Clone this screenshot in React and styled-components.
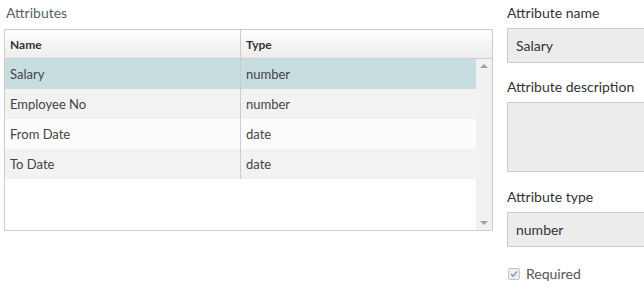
import React from "react";
import styled, { createGlobalStyle } from "styled-components";

const GlobalStyle = createGlobalStyle`
  body {
    margin: 0;
    font-family: Lato, "Open Sans", sans-serif;
    color: #333;
    background: #fff;
    overflow: hidden;
  }
`;

const Page = styled.div`
  display: flex;
  gap: 14px;
  padding: 3px 0 0 4px;
  width: 644px;
  height: 295px;
  box-sizing: border-box;
  overflow: hidden;
`;

const ListPanel = styled.div`
  width: 489px;
  flex-shrink: 0;
`;

const Title = styled.div`
  font-size: 14px;
  line-height: 20px;
  color: #56616b;
  padding-left: 2px;
  margin-bottom: 6px;
`;

const Grid = styled.div`
  border: 1px solid #ccc;
  height: 202px;
  box-sizing: border-box;
  display: flex;
  flex-direction: column;
`;

const HeaderRow = styled.div`
  display: grid;
  grid-template-columns: 235px 1fr;
  height: 28px;
  flex-shrink: 0;
  border-bottom: 1px solid #ccc;
  background: linear-gradient(#fff, #ececec);
`;

const HeaderCell = styled.div`
  display: flex;
  align-items: center;
  padding-left: 5px;
  font-size: 12px;
  font-weight: bold;
  color: #333;
  border-left: ${(p) => (p.$first ? "none" : "1px solid #ccc")};
`;

const Body = styled.div`
  flex: 1;
  display: flex;
  min-height: 0;
`;

const Rows = styled.div`
  flex: 1;
`;

const Row = styled.div`
  display: grid;
  grid-template-columns: 235px 1fr;
  height: 30px;
  background: ${(p) => p.$bg};
`;

const Cell = styled.div`
  display: flex;
  align-items: center;
  padding: 0 0 1px 5px;
  font-size: 13px;
  color: #444;
  border-left: ${(p) => (p.$first ? "none" : "1px solid #ccc")};
`;

const Scrollbar = styled.div`
  width: 16px;
  background: #f1f1f1;
  display: flex;
  flex-direction: column;
  justify-content: space-between;
  align-items: center;
  padding: 5px 0 5px;
  box-sizing: border-box;
`;

const Arrow = styled.div`
  width: 0;
  height: 0;
  border-left: 4px solid transparent;
  border-right: 4px solid transparent;
  ${(p) =>
    p.$down
      ? "border-top: 4px solid #a3a3a3;"
      : "border-bottom: 4px solid #a3a3a3;"}
`;

const FormPanel = styled.div`
  display: flex;
  flex-direction: column;
  flex-shrink: 0;
  width: 180px;
`;

const Label = styled.div`
  font-size: 14px;
  line-height: 20px;
  color: #333;
  margin-bottom: 5px;
`;

const Field = styled.div`
  height: ${(p) => p.$h}px;
  box-sizing: border-box;
  background: #ececec;
  border: 1px solid #ccc;
  border-right: none;
  padding: 0 8px;
  display: flex;
  align-items: center;
  font-size: 14px;
  color: #333;
  margin-bottom: ${(p) => p.$mb}px;
`;

const CheckRow = styled.label`
  display: flex;
  align-items: center;
  gap: 6px;
  font-size: 14px;
  color: #555;
  margin-top: 4px;
`;

const Box = styled.span`
  width: 10px;
  height: 10px;
  border: 1px solid #c4c4c4;
  border-radius: 2px;
  background: #eee;
  display: flex;
  align-items: center;
  justify-content: center;
  margin-left: 1px;
`;

const attributes = [
  { name: "Salary", type: "number" },
  { name: "Employee No", type: "number" },
  { name: "From Date", type: "date" },
  { name: "To Date", type: "date" },
];

const rowBg = (i) => (i === 0 ? "#c8dde0" : i % 2 ? "#f2f2f2" : "#fcfcfc");

export default function App() {
  return (
    <>
      <GlobalStyle />
      <Page>
        <ListPanel>
          <Title>Attributes</Title>
          <Grid>
            <HeaderRow>
              <HeaderCell $first>Name</HeaderCell>
              <HeaderCell>Type</HeaderCell>
            </HeaderRow>
            <Body>
              <Rows>
                {attributes.map((a, i) => (
                  <Row key={a.name} $bg={rowBg(i)}>
                    <Cell $first>{a.name}</Cell>
                    <Cell>{a.type}</Cell>
                  </Row>
                ))}
              </Rows>
              <Scrollbar>
                <Arrow />
                <Arrow $down />
              </Scrollbar>
            </Body>
          </Grid>
        </ListPanel>
        <FormPanel>
          <Label>Attribute name</Label>
          <Field $h={35} $mb={14}>Salary</Field>
          <Label>Attribute description</Label>
          <Field $h={70} $mb={15} />
          <Label>Attribute type</Label>
          <Field $h={35} $mb={14}>number</Field>
          <CheckRow>
            <Box>
              <svg width="8" height="8" viewBox="0 0 8 8">
                <path d="M1 4.2 L3.1 6.2 L7 1.5" fill="none" stroke="#9a9a9a" strokeWidth="1.6" />
              </svg>
            </Box>
            Required
          </CheckRow>
        </FormPanel>
      </Page>
    </>
  );
}
